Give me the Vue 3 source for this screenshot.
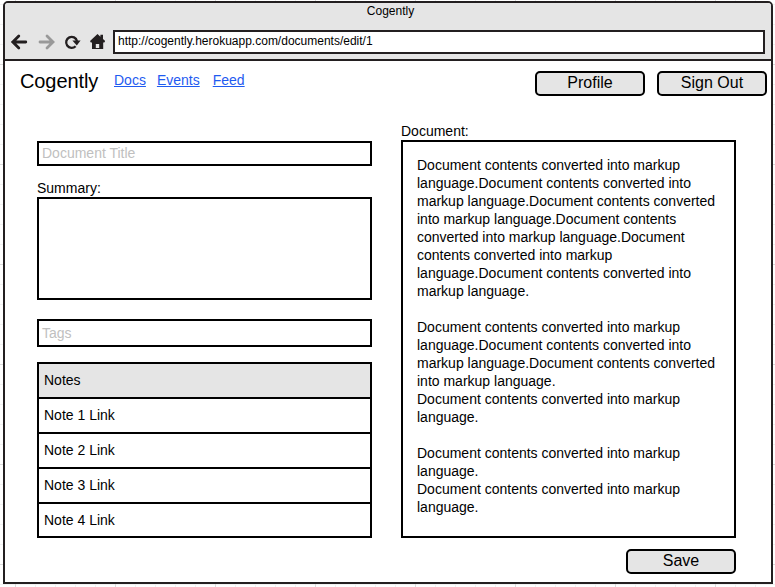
<script setup>
const links = ['Docs', 'Events', 'Feed']
const notes = ['Note 1 Link', 'Note 2 Link', 'Note 3 Link', 'Note 4 Link']
const documentText = `Document contents converted into markup
language.Document contents converted into
markup language.Document contents converted
into markup language.Document contents
converted into markup language.Document
contents converted into markup
language.Document contents converted into
markup language.

Document contents converted into markup
language.Document contents converted into
markup language.Document contents converted
into markup language.
Document contents converted into markup
language.

Document contents converted into markup
language.
Document contents converted into markup
language.`
</script>

<template>
  <div class="canvas">
    <div class="window">
      <header class="chrome">
        <div class="title">Cogently</div>
        <div class="toolbar">
          <svg class="icons" width="108" height="24" viewBox="5 30 108 24" fill="none">
            <g stroke-width="2.8" stroke-linecap="round">
              <path d="M25.8 42H14M18.8 36L12.8 42L18.8 48" stroke="#231f20" />
              <path d="M40 42H52M47 36L53 42L47 48" stroke="#999" />
            </g>
            <path d="M75.6 46.2A5.5 5.5 0 1 1 77 41" stroke="#231f20" stroke-width="2.3" />
            <path d="M72.4 40.4H80.6L76.8 45.4Z" fill="#231f20" />
            <path
              fill-rule="evenodd"
              d="M97.5 34L100.4 36.7V34.8H103V39L105.2 41.1L104.3 42.6H103.2V49H92V42.6H90.8L90 41.1ZM95.8 44V48H99.2V44Z"
              fill="#231f20"
            />
          </svg>
          <div class="address">http://cogently.herokuapp.com/documents/edit/1</div>
        </div>
      </header>

      <nav class="navbar">
        <div class="brand">Cogently</div>
        <div class="links">
          <a v-for="link in links" :key="link">{{ link }}</a>
        </div>
        <button class="btn profile">Profile</button>
        <button class="btn">Sign Out</button>
      </nav>

      <main class="content">
        <section class="left">
          <div class="field doc-title">Document Title</div>
          <div class="label">Summary:</div>
          <div class="summary"></div>
          <div class="field tags">Tags</div>
          <div class="notes">
            <div class="row head">Notes</div>
            <div v-for="note in notes" :key="note" class="row">{{ note }}</div>
          </div>
        </section>
        <section class="right">
          <div class="label">Document:</div>
          <div class="document">{{ documentText }}</div>
          <button class="btn save">Save</button>
        </section>
      </main>
    </div>
  </div>
</template>

<style>
body {
  margin: 0;
  overflow: hidden;
}
</style>

<style scoped>
* {
  box-sizing: border-box;
}
.canvas {
  width: 775px;
  height: 587px;
  padding: 1px 2px 3px 3px;
  font: 14px/18px 'Liberation Sans', Arial, sans-serif;
  color: #000;
  background-color: #fff;
  background-image:
    linear-gradient(#dcdcdc 1px, transparent 1px),
    linear-gradient(90deg, #dcdcdc 1px, transparent 1px),
    linear-gradient(#f2f2f2 1px, transparent 1px),
    linear-gradient(90deg, #f2f2f2 1px, transparent 1px);
  background-size: 100px 100px, 100px 100px, 20px 20px, 20px 20px;
  background-position: 0 64px, 15px 0, 0 4px, 15px 0;
}
.window {
  width: 770px;
  height: 583px;
  border: 2px solid #231f20;
  border-radius: 5px 5px 0 0;
  background: #fff;
  overflow: hidden;
}
.chrome {
  height: 58px;
  background: #e5e5e5;
  border-bottom: 2px solid #231f20;
}
.title {
  height: 27px;
  padding-left: 5px;
  font-size: 12px;
  line-height: 17px;
  text-align: center;
}
.toolbar {
  display: flex;
}
.icons {
  flex: none;
}
.address {
  width: 652px;
  height: 24px;
  padding-left: 3px;
  border: 2px solid #231f20;
  background: #fff;
  font-size: 12px;
  line-height: 19px;
}
.navbar {
  display: flex;
  height: 61px;
  padding: 10px 4px 0 15px;
}
.brand {
  width: 94px;
  font-size: 20px;
  line-height: 21px;
  letter-spacing: -0.1px;
}
.links {
  flex: 1;
  display: flex;
  gap: 11px;
}
.links a {
  height: 18px;
  color: #1f5bf0;
  text-decoration: underline;
  text-decoration-thickness: 1px;
  text-underline-offset: 1px;
}
.links a:last-child {
  margin-left: 2px;
}
.btn {
  display: block;
  width: 110px;
  height: 25px;
  padding: 0 0 2px;
  border: 2px solid #000;
  border-radius: 5px;
  background: #e5e5e5;
  color: #000;
  font: 16px/19px 'Liberation Sans', Arial, sans-serif;
  text-align: center;
}
.profile {
  margin-right: 12px;
}
.content {
  display: flex;
  gap: 29px;
  padding-left: 32px;
}
.left,
.right {
  width: 335px;
}
.left {
  padding-top: 19px;
}
.field {
  border: 2px solid #000;
  padding-left: 3px;
  color: #c0c0c0;
}
.doc-title {
  height: 25px;
  line-height: 21px;
  margin-bottom: 13px;
}
.label {
  height: 18px;
}
.summary {
  height: 103px;
  border: 2px solid #000;
  margin-bottom: 19px;
}
.tags {
  height: 28px;
  line-height: 24px;
  margin-bottom: 15px;
}
.notes {
  border: 2px solid #000;
}
.row {
  height: 35px;
  padding-left: 5px;
  line-height: 33px;
  border-bottom: 2px solid #000;
}
.row:last-child {
  height: 32px;
  border-bottom: 0;
}
.head {
  background: #e5e5e5;
}
.document {
  height: 398px;
  padding: 14px;
  border: 2px solid #000;
  white-space: pre;
}
.save {
  margin: 11px 0 0 auto;
}
</style>
